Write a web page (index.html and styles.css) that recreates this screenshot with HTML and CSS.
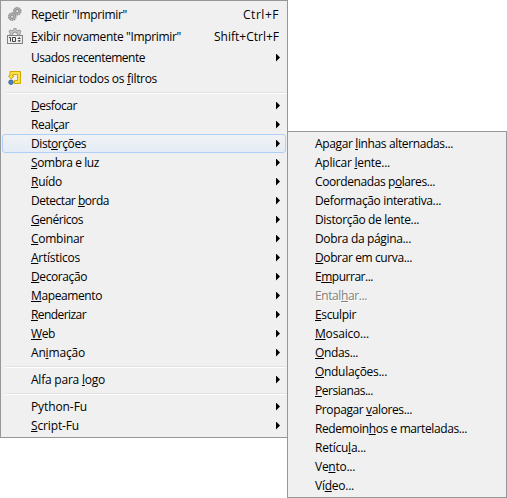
FILE: index.html
```html
<!DOCTYPE html>
<html lang="pt-BR">
<head>
<meta charset="utf-8">
<title>Filtros</title>
<link rel="stylesheet" href="styles.css">
</head>
<body>
<nav class="menu main">
  <div class="item tall"><svg class="icon" width="16" height="16" viewBox="0 0 16 16"><circle cx="10.2" cy="5.2" r="3.7" fill="#b4b4b4" stroke="#949494" stroke-width="1.3" stroke-dasharray="1.6 .7"/><circle cx="10.2" cy="5.2" r="1.7" fill="#ddd" stroke="#858585"/><circle cx="5.2" cy="10.6" r="3.7" fill="#b4b4b4" stroke="#949494" stroke-width="1.3" stroke-dasharray="1.6 .7"/><circle cx="5.2" cy="10.6" r="1.7" fill="#ddd" stroke="#858585"/></svg><span class="label" data-w="96">Re<u>p</u>etir "Imprimir"</span><span class="key" data-w="36">Ctrl+F</span></div>
  <div class="item tall"><svg class="icon" width="16" height="16" viewBox="0 0 16 16"><path d="M3 8V5L2 3l2-1 1 1 2-1V0h2v2l2 1 1-1 2 1-1 2v3z" fill="#c6c6c6" stroke="#999"/><path d="M5.500 8V6.500a2.500 2.500 0 0 1 5 0V8" fill="#efefef" stroke="#888"/><rect x=".5" y="7.500" width="15" height="8" fill="#eee" stroke="#808080"/><path d="M2 9.500h1.500V13.500M5.500 9.500h3v4h-3z" fill="none" stroke="#444"/><path d="M10.500 11l1.700-2 1.700 2zM10.500 12.200l1.700 2 1.700-2z" fill="#444"/></svg><span class="label" data-w="150"><u>E</u>xibir novamente "Imprimir"</span><span class="key" data-w="65">Shift+Ctrl+F</span></div>
  <div class="item recent"><span class="label" data-w="114">Usados recentemente</span><i class="arrow"></i></div>
  <div class="item reset"><svg class="icon" width="16" height="16" viewBox="0 0 16 16"><path d="M3 .5h10.500v12H7.500v-3h3V3.500H5.500V5H7L4.250 8 1.500 5H3z" fill="#fbe24a" stroke="#d1a800"/><circle cx="4" cy="11.200" r="2.200" fill="#5584bd" stroke="#3465a4"/></svg><span class="label" data-w="126">Reiniciar todos os <u>f</u>iltros</span></div>
  <hr>
  <div class="item"><span class="label" data-w="46"><u>D</u>esfocar</span><i class="arrow"></i></div>
  <div class="item"><span class="label" data-w="38">Rea<u>l</u>çar</span><i class="arrow"></i></div>
  <div class="item active"><span class="label" data-w="55">Dist<u>o</u>rções</span><i class="arrow"></i></div>
  <div class="item"><span class="label" data-w="68"><u>S</u>ombra e luz</span><i class="arrow"></i></div>
  <div class="item"><span class="label" data-w="31"><u>R</u>uído</span><i class="arrow"></i></div>
  <div class="item"><span class="label" data-w="78">Detectar <u>b</u>orda</span><i class="arrow"></i></div>
  <div class="item"><span class="label" data-w="52"><u>G</u>enéricos</span><i class="arrow"></i></div>
  <div class="item"><span class="label" data-w="53"><u>C</u>ombinar</span><i class="arrow"></i></div>
  <div class="item"><span class="label" data-w="49"><u>A</u>rtísticos</span><i class="arrow"></i></div>
  <div class="item"><span class="label" data-w="56"><u>D</u>ecoração</span><i class="arrow"></i></div>
  <div class="item"><span class="label" data-w="71"><u>M</u>apeamento</span><i class="arrow"></i></div>
  <div class="item"><span class="label" data-w="55"><u>R</u>enderizar</span><i class="arrow"></i></div>
  <div class="item"><span class="label" data-w="24"><u>W</u>eb</span><i class="arrow"></i></div>
  <div class="item"><span class="label" data-w="54">An<u>i</u>mação</span><i class="arrow"></i></div>
  <hr>
  <div class="item"><span class="label" data-w="74">Alfa para <u>l</u>ogo</span><i class="arrow"></i></div>
  <hr>
  <div class="item"><span class="label" data-w="56">Python-Fu</span><i class="arrow"></i></div>
  <div class="item"><span class="label" data-w="48"><u>S</u>cript-Fu</span><i class="arrow"></i></div>
</nav>
<nav class="menu sub">
  <div class="item"><span class="label" data-w="138">Apagar <u>l</u>inhas alternadas...</span></div>
  <div class="item"><span class="label" data-w="75">Aplicar <u>l</u>ente...</span></div>
  <div class="item"><span class="label" data-w="120">Coordenadas p<u>o</u>lares...</span></div>
  <div class="item"><span class="label" data-w="126">Deformação interativa...</span></div>
  <div class="item"><span class="label" data-w="104">Distorção de lente...</span></div>
  <div class="item"><span class="label" data-w="96">Dobra da página...</span></div>
  <div class="item"><span class="label" data-w="97"><u>D</u>obrar em curva...</span></div>
  <div class="item"><span class="label" data-w="58">E<u>m</u>purrar...</span></div>
  <div class="item disabled"><span class="label" data-w="52">Ental<u>h</u>ar...</span></div>
  <div class="item"><span class="label" data-w="41"><u>E</u>sculpir</span></div>
  <div class="item"><span class="label" data-w="54"><u>M</u>osaico...</span></div>
  <div class="item"><span class="label" data-w="43"><u>O</u>ndas...</span></div>
  <div class="item"><span class="label" data-w="72"><u>O</u>ndulações...</span></div>
  <div class="item"><span class="label" data-w="58"><u>P</u>ersianas...</span></div>
  <div class="item"><span class="label" data-w="97">Propagar <u>v</u>alores...</span></div>
  <div class="item"><span class="label" data-w="152">Redemoin<u>h</u>os e marteladas...</span></div>
  <div class="item"><span class="label" data-w="51">Retícu<u>l</u>a...</span></div>
  <div class="item"><span class="label" data-w="40">Ve<u>n</u>to...</span></div>
  <div class="item"><span class="label" data-w="39">Ví<u>d</u>eo...</span></div>
</nav>
<script src="labels.js"></script>
</body>
</html>
```
FILE: styles.css
```css
* { box-sizing: border-box; }
body {
  margin: 0;
  height: 498px;
  background: #fff;
  color: #000;
  font: 12px/18px "Open Sans", "Noto Sans", sans-serif;
  overflow: hidden;
}
.menu {
  background: #f0f0f0;
  border: 1px solid #979797;
  padding: 2px;
}
.main { width: 288px; height: 438px; }
.sub {
  position: absolute;
  left: 287px;
  top: 131px;
  width: 220px;
  height: 367px;
}
.item {
  position: relative;
  display: flex;
  align-items: center;
  height: 19px;
  padding: 0 5px 0 28px;
  white-space: nowrap;
}
.sub .item { padding-left: 25px; }
.tall { height: 22px; }
.recent { height: 21px; }
.reset { height: 20px; }
.icon { position: absolute; left: 4px; top: 3px; }
.label, .key { flex: none; padding-top: 1px; }
.key { margin-left: auto; margin-right: 1px; }
u { text-decoration: underline 1px; text-underline-offset: 1px; text-decoration-skip-ink: none; }
.active::before {
  content: "";
  position: absolute;
  inset: 0 -1px 0 -1px;
  border: 1px solid #aecff7;
  border-radius: 3px;
  background: linear-gradient(#f0f2f5, #e5ecf5);
}
.active > * { position: relative; }
.arrow {
  margin-left: auto;
  width: 4px;
  height: 8px;
  background: #000;
  clip-path: polygon(0 0, 100% 50%, 0 100%);
}
.disabled { color: #808080; text-shadow: 1px 1px #fff; }
hr {
  height: 2px;
  margin: 4px -1px 2px 3px;
  border: 0;
  border-top: 1px solid #e0e0e0;
  background: #fff;
}
```
FILE: labels.js
```js
document.querySelectorAll("[data-w]").forEach(function (el) {
  var natural = el.getBoundingClientRect().width;
  var count = el.textContent.length;
  el.style.letterSpacing = (Number(el.dataset.w) - natural) / count + "px";
});
```
